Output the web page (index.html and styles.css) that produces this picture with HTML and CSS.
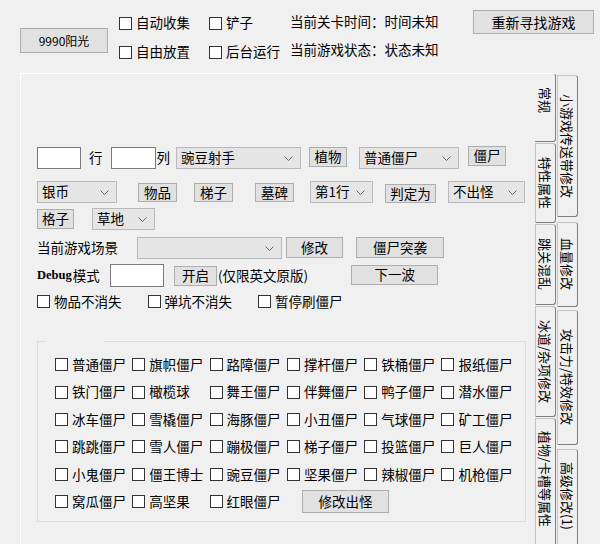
FILE: index.html
```html
<!DOCTYPE html>
<html lang="zh-CN">
<head>
<meta charset="utf-8">
<link rel="stylesheet" href="styles.css">
</head>
<body>
<div class="top">
  <span class="btn sun">9990阳光</span>
  <div class="opts">
    <span class="cb"><i></i>自动收集</span>
    <span class="cb"><i></i>铲子</span>
    <span class="cb"><i></i>自由放置</span>
    <span class="cb"><i></i>后台运行</span>
  </div>
  <div class="status">
    <div>当前关卡时间：时间未知</div>
    <div>当前游戏状态：状态未知</div>
  </div>
  <span class="btn refind">重新寻找游戏</span>
</div>
<div class="main">
  <div class="panel">
    <div class="row r1">
      <span class="tb w44"></span>
      <span class="lbl l-hang">行</span>
      <span class="tb w45"></span>
      <span class="lbl l-lie">列</span>
      <span class="combo c-plant">豌豆射手<svg width="9" height="5" viewBox="0 0 9 5"><path d="M0.5 0.5L4.5 4.5L8.5 0.5" fill="none" stroke="#666"/></svg></span>
      <span class="btn b-plant">植物</span>
      <span class="combo c-zombie">普通僵尸<svg width="9" height="5" viewBox="0 0 9 5"><path d="M0.5 0.5L4.5 4.5L8.5 0.5" fill="none" stroke="#666"/></svg></span>
      <span class="btn b-zombie">僵尸</span>
    </div>
    <div class="row r2">
      <span class="combo c-coin">银币<svg width="9" height="5" viewBox="0 0 9 5"><path d="M0.5 0.5L4.5 4.5L8.5 0.5" fill="none" stroke="#666"/></svg></span>
      <span class="btn b-item">物品</span>
      <span class="btn b-ladder">梯子</span>
      <span class="btn b-grave">墓碑</span>
      <span class="combo c-line">第1行<svg width="9" height="5" viewBox="0 0 9 5"><path d="M0.5 0.5L4.5 4.5L8.5 0.5" fill="none" stroke="#666"/></svg></span>
      <span class="btn b-judge">判定为</span>
      <span class="combo c-spawn">不出怪<svg width="9" height="5" viewBox="0 0 9 5"><path d="M0.5 0.5L4.5 4.5L8.5 0.5" fill="none" stroke="#666"/></svg></span>
    </div>
    <div class="row r3">
      <span class="btn b-cell">格子</span>
      <span class="combo c-grass">草地<svg width="9" height="5" viewBox="0 0 9 5"><path d="M0.5 0.5L4.5 4.5L8.5 0.5" fill="none" stroke="#666"/></svg></span>
    </div>
    <div class="row r4">
      <span class="lbl l-scene">当前游戏场景</span>
      <span class="combo c-scene"><span></span><svg width="9" height="5" viewBox="0 0 9 5"><path d="M0.5 0.5L4.5 4.5L8.5 0.5" fill="none" stroke="#666"/></svg></span>
      <span class="btn b-modify">修改</span>
      <span class="btn b-raid">僵尸突袭</span>
    </div>
    <div class="row r5">
      <span class="lbl l-debug"><span class="dbg">Debug</span>模式</span>
      <span class="tb w54"></span>
      <span class="btn b-open">开启</span>
      <span class="lbl l-note">(仅限英文原版)</span>
      <span class="btn b-wave">下一波</span>
    </div>
    <div class="row r6">
      <span class="cb"><i></i>物品不消失</span>
      <span class="cb cb2"><i></i>弹坑不消失</span>
      <span class="cb cb3"><i></i>暂停刷僵尸</span>
    </div>
    <div class="group">
      <div class="grid">
        <span class="cb"><i></i>普通僵尸</span>
        <span class="cb"><i></i>旗帜僵尸</span>
        <span class="cb"><i></i>路障僵尸</span>
        <span class="cb"><i></i>撑杆僵尸</span>
        <span class="cb"><i></i>铁桶僵尸</span>
        <span class="cb"><i></i>报纸僵尸</span>
        <span class="cb"><i></i>铁门僵尸</span>
        <span class="cb"><i></i>橄榄球</span>
        <span class="cb"><i></i>舞王僵尸</span>
        <span class="cb"><i></i>伴舞僵尸</span>
        <span class="cb"><i></i>鸭子僵尸</span>
        <span class="cb"><i></i>潜水僵尸</span>
        <span class="cb"><i></i>冰车僵尸</span>
        <span class="cb"><i></i>雪橇僵尸</span>
        <span class="cb"><i></i>海豚僵尸</span>
        <span class="cb"><i></i>小丑僵尸</span>
        <span class="cb"><i></i>气球僵尸</span>
        <span class="cb"><i></i>矿工僵尸</span>
        <span class="cb"><i></i>跳跳僵尸</span>
        <span class="cb"><i></i>雪人僵尸</span>
        <span class="cb"><i></i>蹦极僵尸</span>
        <span class="cb"><i></i>梯子僵尸</span>
        <span class="cb"><i></i>投篮僵尸</span>
        <span class="cb"><i></i>巨人僵尸</span>
        <span class="cb"><i></i>小鬼僵尸</span>
        <span class="cb"><i></i>僵王博士</span>
        <span class="cb"><i></i>豌豆僵尸</span>
        <span class="cb"><i></i>坚果僵尸</span>
        <span class="cb"><i></i>辣椒僵尸</span>
        <span class="cb"><i></i>机枪僵尸</span>
        <span class="cb"><i></i>窝瓜僵尸</span>
        <span class="cb"><i></i>高坚果</span>
        <span class="cb"><i></i>红眼僵尸</span>
        <span class="btn b-spawnmod">修改出怪</span>
      </div>
    </div>
  </div>
  <div class="tabs">
    <div class="tcol tcol-a">
      <div class="tab sel t-a1"><span>常规</span></div>
      <div class="tab t-a2"><span>特性属性</span></div>
      <div class="tab t-a3"><span>跳关混乱</span></div>
      <div class="tab t-a4"><span>冰道/杂项修改</span></div>
      <div class="tab top-text t-a5"><span>植物/卡槽等属性</span></div>
    </div>
    <div class="tcol tcol-b">
      <div class="tab t-b1"><span>小游戏传送带修改</span></div>
      <div class="tab t-b2"><span>血量修改</span></div>
      <div class="tab t-b3"><span>攻击力/特效修改</span></div>
      <div class="tab top-text t-b4"><span>高级修改(1)</span></div>
    </div>
  </div>
</div>
</body>
</html>
```
FILE: styles.css
```css
* { box-sizing: border-box; }
html, body { margin: 0; padding: 0; }
body {
  width: 600px;
  height: 544px;
  overflow: hidden;
  background: #f0f0f0;
  font-family: "Noto Sans CJK SC", sans-serif;
  font-size: 13.5px;
  line-height: 1;
  color: #000;
}

/* generic controls */
.btn {
  display: inline-flex;
  align-items: center;
  justify-content: center;
  background: #e1e1e1;
  border: 1px solid #adadad;
  flex: none;
  white-space: nowrap;
}
.combo {
  display: inline-flex;
  align-items: center;
  justify-content: space-between;
  background: #e5e5e5;
  border: 1px solid #b9b9b9;
  padding: 0 7px 0 4px;
  height: 22px;
  flex: none;
  white-space: nowrap;
}
.combo svg { flex: none; }
.tb {
  display: inline-block;
  background: #fff;
  border: 1px solid #7a7a7a;
  height: 22px;
  flex: none;
}
.lbl {
  display: inline-flex;
  align-items: center;
  height: 22px;
  flex: none;
  white-space: nowrap;
}
.cb {
  display: inline-flex;
  align-items: center;
  gap: 4px;
  white-space: nowrap;
}
.cb i {
  width: 13px;
  height: 13px;
  border: 1px solid #333;
  background: #fff;
  flex: none;
}

/* top strip */
.top {
  display: flex;
  align-items: flex-start;
  height: 73px;
}
.sun {
  margin: 28px 0 0 20px;
  width: 88px;
  height: 25px;
  font-size: 12px;
}
.opts {
  margin: 14px 0 0 11px;
  display: grid;
  grid-template-columns: 90px 81px;
  grid-template-rows: 18px 18px;
  row-gap: 11px;
}
.status {
  width: 183px;
  margin-top: 13px;
  display: flex;
  flex-direction: column;
  gap: 10px;
}
.status div {
  height: 18px;
  display: flex;
  align-items: center;
  white-space: nowrap;
}
.refind {
  margin-top: 10px;
  width: 121px;
  height: 24px;
  font-size: 14px;
}

/* main */
.main {
  display: flex;
  align-items: flex-start;
}
.panel {
  margin-left: 20px;
  width: 515px;
  height: 471px;
  border-top: 1px solid #fff;
  border-left: 1px solid #fff;
  padding: 73px 0 0 16px;
  flex: none;
}
.row {
  display: flex;
  align-items: flex-start;
}
.r1 { height: 22px; }
.r2 { height: 22px; margin-top: 12px; }
.r3 { height: 22px; margin-top: 5px; }
.r4 { height: 22px; margin-top: 7px; }
.r5 { height: 23px; margin-top: 5px; }
.r6 { height: 16px; margin-top: 8px; }

.w44 { width: 44px; }
.w45 { width: 45px; margin-left: 8px; }
.w54 { width: 54px; height: 23px; }
.l-hang { margin-left: 8px; }
.l-lie { margin-left: 1px; }
.c-plant { width: 125px; margin-left: 6px; }
.b-plant { width: 38px; height: 20px; margin-left: 8px; }
.c-zombie { width: 100px; margin-left: 12px; }
.b-zombie { width: 38px; height: 20px; margin-left: 9px; margin-top: -1px; }

.c-coin { width: 80px; }
.b-item { width: 39px; height: 19px; margin-left: 21px; margin-top: 2px; }
.b-ladder { width: 39px; height: 19px; margin-left: 17px; margin-top: 2px; }
.b-grave { width: 39px; height: 19px; margin-left: 22px; margin-top: 2px; }
.c-line { width: 63px; margin-left: 16px; }
.b-judge { width: 51px; height: 19px; margin-left: 12px; margin-top: 3px; }
.c-spawn { width: 77px; margin-left: 12px; }

.b-cell { width: 37px; height: 20px; margin-top: 1px; }
.c-grass { width: 63px; margin-left: 18px; }

.l-scene { width: 100px; }
.c-scene { width: 145px; }
.b-modify { width: 57px; height: 21px; margin-left: 4px; }
.b-raid { width: 88px; height: 21px; margin-left: 13px; }

.l-debug { width: 73px; height: 23px; }
.dbg {
  font-family: "Liberation Serif", serif;
  font-size: 12.5px;
  font-weight: bold;
  margin-right: 1px;
}
.b-open { width: 43px; height: 20px; margin-left: 10px; margin-top: 2px; }
.l-note { margin-left: 1px; height: 23px; }
.b-wave { width: 87px; height: 20px; margin-left: 43px; margin-top: 1px; }

.cb2 { margin-left: 26px; }
.cb3 { margin-left: 26px; }

/* group box */
.group {
  position: relative;
  margin-top: 30px;
  width: 489px;
  height: 181px;
  border: 1px solid #dcdcdc;
  padding: 9px 0 0 17px;
}
.group::before {
  content: "";
  position: absolute;
  top: -1px;
  left: 8px;
  width: 58px;
  height: 1px;
  background: #f0f0f0;
}
.grid {
  display: grid;
  grid-template-columns: repeat(6, 77.3px);
  grid-auto-rows: 27.4px;
  align-items: center;
}
.b-spawnmod {
  grid-column: 4 / span 2;
  justify-self: start;
  margin-left: 15px;
  width: 87px;
  height: 23px;
}

/* vertical tabs */
.tabs {
  display: flex;
  gap: 1px;
  height: 471px;
  overflow: hidden;
}
.tcol {
  display: flex;
  flex-direction: column;
  width: 21px;
  flex: none;
}
.tcol-b { margin-top: 2px; }
.tab {
  display: flex;
  align-items: center;
  justify-content: center;
  flex: none;
  border: 1px solid #c4c4c4;
  border-right: 1px solid #7f7f7f;
  border-bottom: 1px solid #7f7f7f;
  border-radius: 0 3px 3px 0;
  font-size: 13px;
}
.tab span {
  writing-mode: vertical-rl;
  text-orientation: sideways;
  white-space: nowrap;
}
.tab.sel {
  border-left: none;
  border-top: 1px solid #fff;
  background: #f0f0f0;
  align-items: flex-start;
  padding-top: 13px;
}
.tab.top-text {
  align-items: flex-start;
  padding-top: 12px;
}
.t-a1 { height: 69px; }
.t-a2 { height: 80px; margin-top: 1px; }
.t-a3 { height: 81px; margin-top: 1px; }
.t-a4 { height: 111px; margin-top: 1px; }
.t-a5 { height: 150px; margin-top: 1px; }
.t-b1 { height: 142px; }
.t-b2 { height: 85px; margin-top: 5px; }
.t-b3 { height: 135px; margin-top: 3px; }
.t-b4 { height: 130px; margin-top: 4px; }
```
